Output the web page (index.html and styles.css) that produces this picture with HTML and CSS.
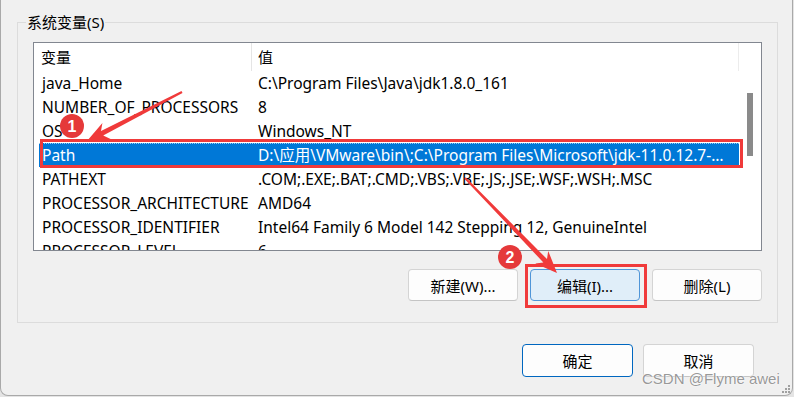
FILE: index.html
```html
<!DOCTYPE html>
<html lang="zh-CN">
<head>
<meta charset="utf-8">
<title>系统变量</title>
<link rel="stylesheet" href="styles.css">
</head>
<body>
<div class="window">
  <section class="group">
    <div class="legend">系统变量(S)</div>
    <div class="listbox">
      <div class="list">
        <div class="row head"><span class="c1">变量</span><span class="c2">值</span></div>
        <div class="row"><span class="c1">java_Home</span><span class="c2">C:\Program Files\Java\jdk1.8.0_161</span></div>
        <div class="row"><span class="c1">NUMBER_OF_PROCESSORS</span><span class="c2">8</span></div>
        <div class="row"><span class="c1">OS</span><span class="c2">Windows_NT</span></div>
        <div class="row sel"><span class="c1">Path</span><span class="c2">D:\应用\VMware\bin\;C:\Program Files\Microsoft\jdk-11.0.12.7-hotspot\bin;C:\Windows\system32</span></div>
        <div class="row"><span class="c1">PATHEXT</span><span class="c2">.COM;.EXE;.BAT;.CMD;.VBS;.VBE;.JS;.JSE;.WSF;.WSH;.MSC</span></div>
        <div class="row"><span class="c1">PROCESSOR_ARCHITECTURE</span><span class="c2">AMD64</span></div>
        <div class="row"><span class="c1">PROCESSOR_IDENTIFIER</span><span class="c2">Intel64 Family 6 Model 142 Stepping 12, GenuineIntel</span></div>
        <div class="row"><span class="c1">PROCESSOR_LEVEL</span><span class="c2">6</span></div>
      </div>
      <div class="scroll"><div class="thumb"></div></div>
    </div>
    <div class="btns">
      <button class="btn">新建(W)...</button>
      <button class="btn hover">编辑(I)...</button>
      <button class="btn">删除(L)</button>
    </div>
  </section>
  <div class="footer">
    <button class="btn big default">确定</button>
    <button class="btn big">取消</button>
  </div>
</div>

<svg class="annot" width="794" height="397" viewBox="0 0 794 397" xmlns="http://www.w3.org/2000/svg">
  <rect x="41.5" y="140.5" width="700" height="26" fill="none" stroke="#f03a3a" stroke-width="3"/>
  <rect x="526.5" y="265.5" width="119" height="41" fill="none" stroke="#f03a3a" stroke-width="3"/>
  <polygon fill="#f03a3a" points="182.5,92.9 103.2,135.4 110.6,138.9 87,141 102.4,122.9 101.0,131.0 181.5,91.1"/>
  <polygon fill="#f03a3a" points="464.3,178.7 543.4,262.5 535.2,263.5 557,273 548.2,250.9 547.0,259.1 465.7,177.3"/>
  <circle cx="72" cy="126" r="12" fill="#e5393a"/>
  <text x="72" y="131.5" class="num">1</text>
  <circle cx="510" cy="257" r="12" fill="#e5393a"/>
  <text x="510" y="262.5" class="num">2</text>
</svg>
<div class="watermark">CSDN @Flyme awei</div>
<div class="grip"><i></i><i></i><i></i><i></i><i></i><i></i></div>
</body>
</html>
```
FILE: styles.css
```css
* { box-sizing: border-box; }
html, body { margin: 0; padding: 0; }
body {
  width: 794px;
  height: 397px;
  background: #e4e4e4;
  position: relative;
  overflow: hidden;
  font-family: "Noto Sans", "Noto Sans CJK SC", sans-serif;
  font-size: 15px;
  color: #000;
}
.window {
  width: 793px;
  height: 396px;
  background: #f0f0f0;
  border: 1px solid #a9a9a9;
  border-top: 0;
  border-radius: 0 0 8px 8px;
  padding: 22px 0 0 16px;
  display: flex;
  flex-direction: column;
}
.group {
  width: 761px;
  height: 301px;
  border: 1px solid #dcdcdc;
  padding: 0 15px;
  display: flex;
  flex-direction: column;
}
.legend {
  margin: -11px 0 0 -7px;
  padding: 0 1px;
  height: 20px;
  line-height: 20px;
  width: fit-content;
  background: #f0f0f0;
}
.listbox {
  margin-top: 10px;
  width: 729px;
  height: 209px;
  border: 1px solid #828790;
  background: #fff;
  display: flex;
  overflow: hidden;
}
.list {
  width: 705px;
  display: flex;
  flex-direction: column;
  flex: none;
  font-size: 15.5px;
}
.row {
  display: flex;
  height: 24px;
  line-height: 24px;
  flex: none;
  white-space: nowrap;
}
.row.head {
  height: 28px;
  line-height: 28px;
  font-size: 15px;
}
.c1 {
  width: 218px;
  padding-left: 8px;
  flex: none;
  overflow: hidden;
}
.c2 {
  flex: 1;
  min-width: 0;
  padding-left: 6px;
  padding-right: 5px;
  overflow: hidden;
  text-overflow: ellipsis;
}
.head .c1 {
  padding-left: 7px;
  border-right: 1px solid #e5e5e5;
}
.head .c2 {
  border-right: 1px solid #ececec;
}
.row.sel {
  background: #0078d7;
  color: #fff;
  margin-left: 5px;
  border-top: 1px dotted #9ccaf0;
  line-height: 22px;
}
.row.sel .c1 {
  width: 213px;
  padding-left: 3px;
}
.row.sel .c2 {
  padding-right: 13px;
}
.scroll {
  flex: 1;
  padding: 50px 0 0 8px;
}
.thumb {
  width: 6px;
  height: 63px;
  background: #8a8a8a;
}
.btns {
  margin-top: 18px;
  display: flex;
  justify-content: flex-end;
  gap: 12px;
}
.btn {
  font: inherit;
  color: #000;
  width: 110px;
  height: 32px;
  padding: 0;
  background: #fdfdfd;
  border: 1px solid #d4d4d4;
  border-bottom-color: #c4c4c4;
  border-radius: 4px;
}
.btn.hover {
  background: #e0eef9;
  border-color: #4f95d8;
}
.footer {
  margin-top: 21px;
  padding-right: 38px;
  display: flex;
  justify-content: flex-end;
  gap: 10px;
}
.btn.big {
  width: 111px;
  height: 33px;
}
.btn.default {
  border: 1px solid #0067c0;
}
.annot {
  position: absolute;
  left: 0;
  top: 0;
  pointer-events: none;
}
.num {
  fill: #fff;
  font-family: "Liberation Sans", sans-serif;
  font-size: 16px;
  font-weight: bold;
  text-anchor: middle;
}
.watermark {
  position: absolute;
  left: 642px;
  top: 370px;
  font-family: "Liberation Sans", sans-serif;
  font-size: 15px;
  line-height: 18px;
  color: rgba(125, 125, 125, 0.8);
  text-shadow: 0 0 2px #fff, 0 0 1px #fff;
  white-space: nowrap;
}
.grip {
  position: absolute;
  left: 781px;
  top: 384px;
  width: 10px;
  height: 10px;
}
.grip i {
  position: absolute;
  width: 2px;
  height: 2px;
  background: #a0a0a0;
}
.grip i:nth-child(1) { left: 7px; top: 1px; }
.grip i:nth-child(2) { left: 4px; top: 4px; }
.grip i:nth-child(3) { left: 7px; top: 4px; }
.grip i:nth-child(4) { left: 1px; top: 7px; }
.grip i:nth-child(5) { left: 4px; top: 7px; }
.grip i:nth-child(6) { left: 7px; top: 7px; }
```
